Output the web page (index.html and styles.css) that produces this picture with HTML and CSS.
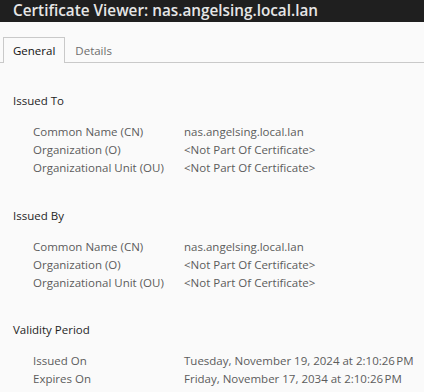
FILE: index.html
```html
<!DOCTYPE html>
<html lang="en">
<head>
    <meta charset="UTF-8">
    <title>Certificate Viewer</title>
    <link rel="stylesheet" href="styles.css">
</head>
<body>
    <div class="titlebar">Certificate Viewer: nas.angelsing.local.lan</div>

    <div class="tabs">
        <div class="tab active">General</div>
        <div class="tab">Details</div>
    </div>

    <div class="content">
        <div class="section">
            <div class="section-title">Issued To</div>
            <div class="row"><span class="label">Common Name (CN)</span><span class="value">nas.angelsing.local.lan</span></div>
            <div class="row"><span class="label">Organization (O)</span><span class="value">&lt;Not Part Of Certificate&gt;</span></div>
            <div class="row"><span class="label">Organizational Unit (OU)</span><span class="value">&lt;Not Part Of Certificate&gt;</span></div>
        </div>

        <div class="section">
            <div class="section-title">Issued By</div>
            <div class="row"><span class="label">Common Name (CN)</span><span class="value">nas.angelsing.local.lan</span></div>
            <div class="row"><span class="label">Organization (O)</span><span class="value">&lt;Not Part Of Certificate&gt;</span></div>
            <div class="row"><span class="label">Organizational Unit (OU)</span><span class="value">&lt;Not Part Of Certificate&gt;</span></div>
        </div>

        <div class="section">
            <div class="section-title">Validity Period</div>
            <div class="row"><span class="label">Issued On</span><span class="value">Tuesday, November 19, 2024 at 2:10:26&#8239;PM</span></div>
            <div class="row"><span class="label">Expires On</span><span class="value">Friday, November 17, 2034 at 2:10:26&#8239;PM</span></div>
        </div>
    </div>
</body>
</html>
```

FILE: styles.css
```css
html, body {
    height: 392px;
}

body {
    margin: 0;
    background-color: #fafafa;
    font-family: 'Open Sans', sans-serif;
    font-size: 11.5px;
    color: #1f1f1f;
    overflow: hidden;
}

.titlebar {
    height: 22px;
    line-height: 21px;
    background-color: #1f1f1f;
    color: #e6e6e6;
    font-size: 15.3px;
    font-weight: 600;
    padding-left: 13px;
    white-space: nowrap;
}

.tabs {
    display: flex;
    margin-top: 15px;
    padding-left: 3px;
    border-bottom: 1px solid #c9c9c9;
}

.tab {
    height: 24px;
    line-height: 25px;
    padding: 0 9px;
    color: #6d6d6d;
    border: 1px solid transparent;
    border-bottom: none;
    margin-bottom: -1px;
}

.tab.active {
    color: #111;
    background-color: #fafafa;
    border-color: #c9c9c9;
    height: 25px;
}

.content {
    padding: 29px 0 0 13px;
}

.section {
    margin-bottom: 29px;
}

.section:last-child {
    margin-bottom: 0;
}

.section-title {
    line-height: 18px;
    color: #1f1f1f;
    margin-bottom: 13px;
}

.row {
    display: flex;
    line-height: 18.2px;
    padding-left: 20px;
    color: #5c5c5c;
}

.label {
    width: 151px;
    flex-shrink: 0;
}

.value {
    white-space: nowrap;
}
```
